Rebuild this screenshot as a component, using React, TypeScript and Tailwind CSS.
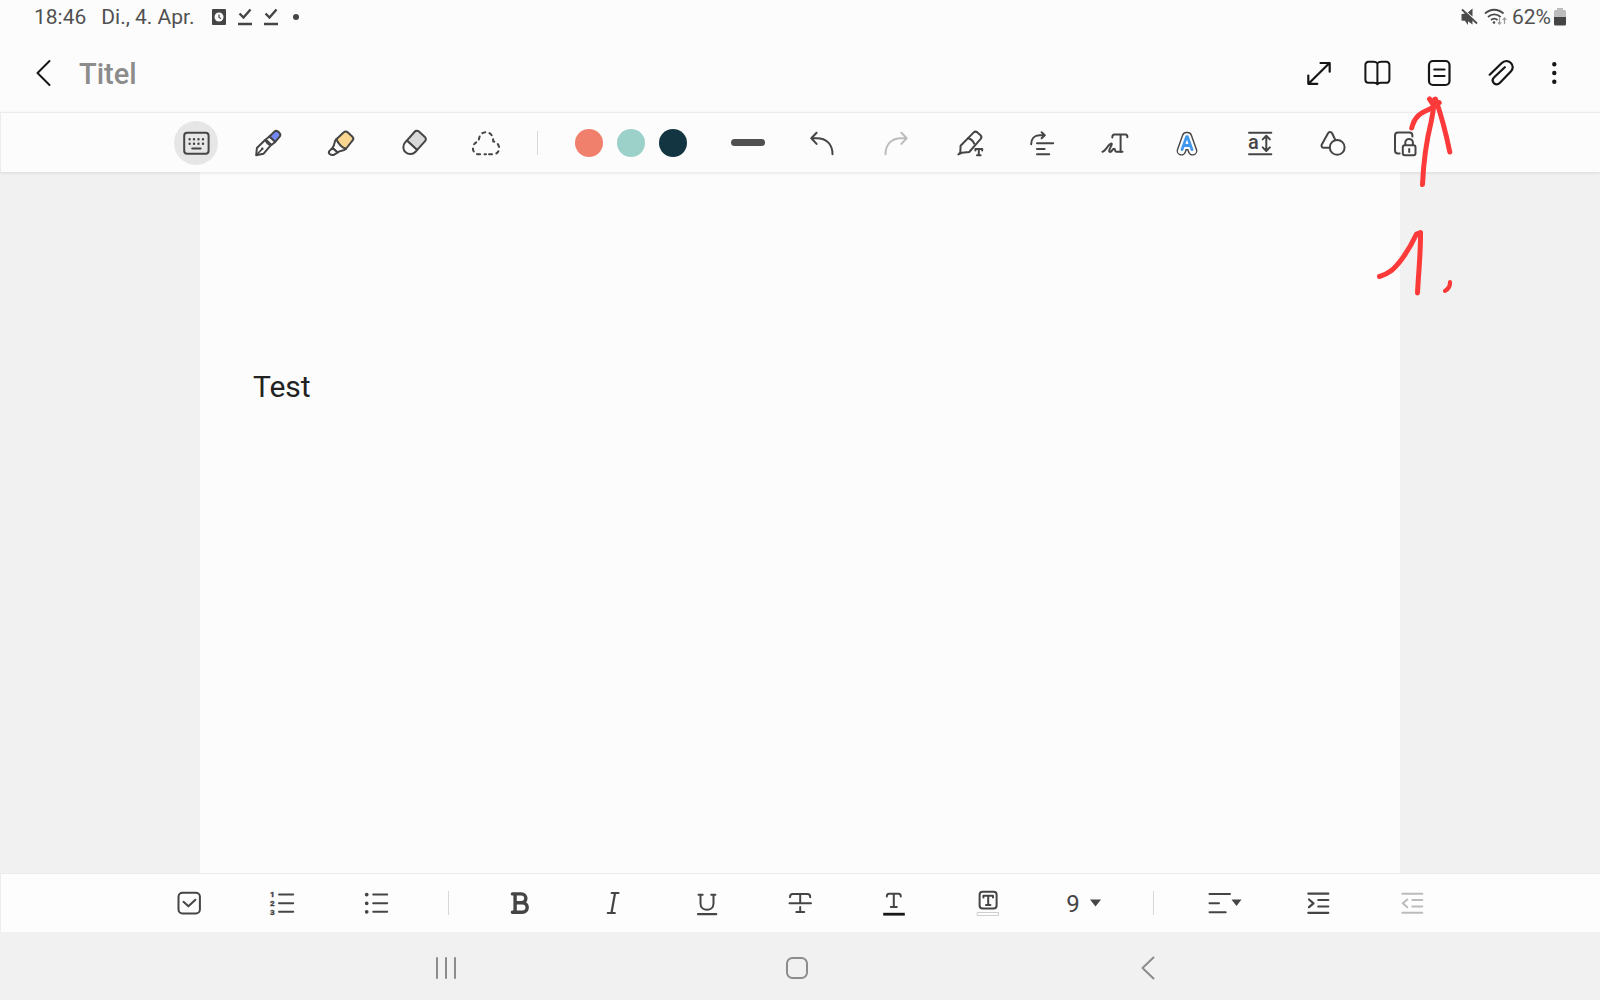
import { useState, type ReactNode } from 'react';
import clsx from 'clsx';

type IconProps = {
    children: ReactNode;
    width?: number;
};

const Icon = ({ children, width = 28 }: IconProps) => (
    <svg
        width={width}
        height={28}
        viewBox={`0 0 ${width} 28`}
        fill="none"
        stroke="currentColor"
        strokeWidth={2}
        strokeLinecap="round"
        strokeLinejoin="round"
        className="shrink-0"
        aria-hidden="true"
    >
        {children}
    </svg>
);

type ToolButtonProps = {
    label: string;
    children: ReactNode;
    active?: boolean;
    disabled?: boolean;
    onClick?: () => void;
};

const ToolButton = ({ label, children, active, disabled, onClick }: ToolButtonProps) => (
    <button
        type="button"
        aria-label={label}
        disabled={disabled}
        onClick={onClick}
        className="flex items-center justify-center"
    >
        <span
            className={clsx(
                'flex size-11 items-center justify-center rounded-full',
                active && 'bg-[#e6e6e6]',
                disabled && 'text-[#bcbcbc]',
            )}
        >
            {children}
        </span>
    </button>
);

const Divider = () => <div className="h-6 w-px bg-[#d8d8d8]" />;

const PEN_TOOLS = [
    {
        id: 'keyboard',
        label: 'Tastatur',
        icon: (
            <Icon>
                <rect x="2.2" y="3.8" width="24.4" height="21" rx="3" />
                <path d="M7.6 10.3h.01M12 10.3h.01M16.5 10.3h.01M21 10.3h.01M7.6 14.8h.01M12 14.8h.01M16.5 14.8h.01M21 14.8h.01" strokeWidth="2.4" />
                <path d="M10.2 19.4h8.4" />
            </Icon>
        ),
    },
    {
        id: 'pen',
        label: 'Stift',
        icon: (
            <Icon>
                <path d="M15.4 7.4l4.9-4.6c1.4-1.3 3.2-1 4.6.4 1.6 1.6 1.8 3.3.6 4.7l-4.3 5z" fill="#7389f5" />
                <path d="M11.8 10.4l3.6-3 5.8 5.5-3.8 3.1z" fill="#fcfcfc" />
                <path d="M2.2 26.2l.7-7.2 8.4-8.3c1 3 2.8 4.8 5.6 5.5l-7.5 8.6z" fill="#fcfcfc" />
                <path d="M2.6 25.8l5.2-5.4" strokeWidth="1.6" />
                <circle cx="8.3" cy="19.8" r=".6" fill="currentColor" strokeWidth="1.4" />
            </Icon>
        ),
    },
    {
        id: 'highlighter',
        label: 'Textmarker',
        icon: (
            <Icon>
                <path d="M9.3 10.3l7.5-7c1.4-1.2 2.8-1.1 4.1.1l4.3 4c1.4 1.3 1.6 2.6.4 4L18.8 20c-3.9-1.6-7.2-4.700-9.5-9.700z" fill="#fad791" />
                <path d="M9.3 10.3c-2.7 2.5-.9 4.8-3.8 8.7l5.1 4.5c3.1-2.9 5.1-.7 8.2-3.500-4-1.700-7.200-4.800-9.500-9.700z" fill="#fcfcfc" />
                <path d="M5.5 19l-3 2.900c-1 1.200-.8 2.100.2 3 1.300 1.100 2.700 1.200 4.500.8l3.400-2.200z" fill="#fcfcfc" />
            </Icon>
        ),
    },
    {
        id: 'eraser',
        label: 'Radierer',
        icon: (
            <Icon>
                <g transform="rotate(-48 14 14)">
                    <path d="M11 7h11.800a3 3 0 0 1 3 3v8a3 3 0 0 1-3 3H11z" fill="#d9d9d9" />
                    <path d="M11 7H8.500a7 7 0 0 0 0 14H11z" fill="#fcfcfc" />
                </g>
            </Icon>
        ),
    },
    {
        id: 'lasso',
        label: 'Auswahl',
        icon: (
            <Icon>
                <path
                    d="M14 25.3H5.800C-1 24-.8 13.600 6.800 12.400 6.600 6.800 9.800 3.200 14 3.200s7.400 3.600 7.200 9.200C28.800 13.600 29 24 22.200 25.300z"
                    strokeDasharray="3 4.400"
                    strokeDashoffset="1.500"
                />
            </Icon>
        ),
    },
];

const COLORS = [
    { name: 'Koralle', className: 'bg-[#f07f6c]' },
    { name: 'Mint', className: 'bg-[#9bd1c8]' },
    { name: 'Dunkelblau', className: 'bg-[#133441]' },
];

const WRITING_TOOLS = [
    {
        label: 'Handschrift in Text',
        icon: (
            <Icon>
                <path d="M2.400 25.400l1.900-1.900.3-6.800L17.500 3.600c1.200-1.200 2.600-1.200 3.900-.2l2.900 2.500c1.400 1.300 1.500 2.600.4 4L13.200 23l-7.500.8z" />
                <path d="M12.200 9.200c2.300.6 4.800 2.600 6 5.400" />
                <path d="M19.400 21.600v-1.600h6.800v1.600M22.800 20v6.300M21 26.300h3.600" />
            </Icon>
        ),
    },
    {
        label: 'Ausrichten',
        icon: (
            <Icon>
                <path d="M3.200 15.300c0-5.600 3.300-9 8.300-9h5M13.600 3.300l3.200 3-3.200 3" />
                <path d="M9 14.200h16.200M9 20h7.600M9 25.300h12.200" />
            </Icon>
        ),
    },
    {
        label: 'Handschrift verbessern',
        icon: (
            <Icon>
                <path d="M1.500 22.800c3.300-1 5.800-7.600 8.800-8.200 2.200-.3-4 7.700-1.400 8.300 2 .4 2.300-3.200 4.200-3.200 1.600 0 .2 3 2.200 3h6.200" />
                <path d="M11.300 8.600c0-2 .6-3 2.200-3h11c1.300 0 1.900.9 1.900 2.600M19.600 5.800v16.900" />
            </Icon>
        ),
    },
    {
        label: 'Stil',
        icon: (
            <Icon>
                <path d="M8.400 21.800L13.500 7.600h1l5.100 14.200M11 16.500h6" strokeWidth="9.600" />
                <path d="M8.400 21.800L13.500 7.600h1l5.100 14.200M11 16.500h6" stroke="#fcfcfc" strokeWidth="6.800" />
                <path d="M9 20.600L13.600 7.600h.8L19 20.600M11 16.500h6" stroke="#3f97ee" strokeWidth="2.800" />
            </Icon>
        ),
    },
    {
        label: 'Zeilenabstand',
        icon: (
            <Icon>
                <path d="M3 3.700h22.300M3 25.300h22.300" />
                <text x="2" y="19.500" fontSize="20" fontFamily="Roboto, sans-serif" fontWeight="500" fill="currentColor" stroke="none">a</text>
                <path d="M20.300 7.200v14.400M16.700 10.400l3.600-3.600 3.600 3.600M16.700 18.400l3.600 3.600 3.600-3.600" />
            </Icon>
        ),
    },
    {
        label: 'Formen',
        icon: (
            <Icon>
                <circle cx="18.200" cy="18.400" r="7.400" />
                <path d="M10.200 18.800H5c-2 0-3-1.500-2.200-3.300L8.900 4.400c1-1.800 3.200-1.900 4.200-.1l3 6.200" />
            </Icon>
        ),
    },
    {
        label: 'Seite sperren',
        icon: (
            <Icon>
                <path d="M8.700 24.400H7a3 3 0 0 1-3-3V6.600a3 3 0 0 1 3-3h11.400a3 3 0 0 1 3 3v1" />
                <rect x="11.800" y="16.300" width="12.700" height="10" rx="2" />
                <path d="M14.300 16v-2.300a3.800 3.800 0 0 1 7.600 0V16M18.200 20v3" />
            </Icon>
        ),
    },
];

const LIST_TOOLS = [
    {
        label: 'Checkliste',
        icon: (
            <Icon>
                <rect x="3.500" y="3.700" width="21.400" height="20.800" rx="4" />
                <path d="M8.500 12.800l4.900 4.400 7-6.500" />
            </Icon>
        ),
    },
    {
        label: 'Nummerierte Liste',
        icon: (
            <Icon>
                <path d="M11 5.600h14.200M11 14.300h14.200M11 22.800h14.200" />
                <g fontSize="8" fontFamily="Roboto, sans-serif" fontWeight="900" fill="currentColor" stroke="currentColor" strokeWidth=".3">
                    <text x="2" y="8.400">1</text>
                    <text x="2" y="17">2</text>
                    <text x="2" y="25.600">3</text>
                </g>
            </Icon>
        ),
    },
    {
        label: 'Aufzählung',
        icon: (
            <Icon>
                <path d="M11.200 5.600h14M11.200 14.300h14M11.200 22.800h14" />
                <path d="M4.700 5.600h.01M4.700 14.300h.01M4.700 22.800h.01" strokeWidth="3.800" />
            </Icon>
        ),
    },
];

const FORMAT_TOOLS = [
    {
        label: 'Fett',
        icon: (
            <Icon>
                <path d="M6.400 4.900h8.800c6.200 0 6.200 8.900 0 8.900H9.100h7c6.800 0 6.800 9.400 0 9.400H6.400M9.100 5v18" strokeWidth="3.400" />
            </Icon>
        ),
    },
    {
        label: 'Kursiv',
        icon: (
            <Icon>
                <path d="M12.700 4h6.800M8.800 24h7M16 4.200l-3.500 19.600" strokeWidth="2.200" />
            </Icon>
        ),
    },
    {
        label: 'Unterstrichen',
        icon: (
            <Icon>
                <path d="M5.500 5.700h4.200M18.200 5.700h4.200M7.500 5.800v8.800c0 8.300 13 8.300 13 0V5.800" />
                <path d="M5 25.200h18.200" strokeWidth="2.200" />
            </Icon>
        ),
    },
    {
        label: 'Durchgestrichen',
        icon: (
            <Icon>
                <path d="M4 8.200c0-2 .9-3.200 2.700-3.200h14.800c1.800 0 2.700 1.200 2.700 3.200M14.200 5v9M3.500 14.300h21.500M14.200 18v5M10.300 23h7.900" />
            </Icon>
        ),
    },
    {
        label: 'Textfarbe',
        icon: (
            <Icon>
                <path d="M6.800 7.600c0-1.900.7-2.900 2.200-2.900h9.600c1.500 0 2.200 1 2.200 2.900M13.800 4.800v13.200M10.800 18h6" />
                <path d="M3.200 25.200h21.600" stroke="#181818" strokeWidth="2.800" strokeLinecap="butt" />
            </Icon>
        ),
    },
    {
        label: 'Texthintergrund',
        icon: (
            <Icon>
                <rect x="5.600" y="2.800" width="17" height="16.600" rx="3" />
                <path d="M9.400 8.500V6.800h9.600v1.700M14.200 6.800v9.200M12 16h4.400" />
                <rect x="3.500" y="23.500" width="21" height="3" stroke="#cfcfcf" strokeWidth="1" fill="#fdfdfd" />
            </Icon>
        ),
    },
];

const HeaderButton = ({ label, children }: { label: string; children: ReactNode }) => (
    <button type="button" aria-label={label} className="flex h-11 items-center justify-center text-[#161616]">
        {children}
    </button>
);

const StatusBar = () => (
    <div className="flex h-[34px] items-center justify-between px-[34px] text-[21px] leading-6 text-[#505050]">
        <div className="flex items-center">
            <span>18:46</span>
            <span className="ml-[15px]">Di., 4. Apr.</span>
            <svg width="68" height="18" viewBox="0 0 68 18" className="ml-4" fill="none" stroke="#454545" strokeWidth="2.400" aria-hidden="true">
                <rect x="1" y="1" width="14" height="16" rx="1" fill="#454545" stroke="none" />
                <circle cx="8" cy="9" r="4.500" fill="#fcfcfc" stroke="none" />
                <path d="M8 6.500v3l2 1" strokeWidth="1.200" />
                <path d="M28.500 5.500l4 4 7-8M27 16h14M54.500 5.500l4 4 7-8M53 16h14" />
            </svg>
            <span className="ml-[14px] size-[6px] rounded-full bg-[#454545]" />
        </div>
        <div className="flex items-center">
            <svg width="46" height="18" viewBox="0 0 46 18" fill="none" stroke="#4a4a4a" aria-hidden="true">
                <path d="M.5 6h3.500l3 3v8L3.700 12.500H.5zM11.500.5v8L6.800 4.500z" fill="#4a4a4a" stroke="none" />
                <path d="M1.500 6l4-1 6 6v5.500L6 12.500H1.500z" fill="#4a4a4a" stroke="none" />
                <path d="M1 1.500l15 14" strokeWidth="1.800" />
                <path d="M24 5.500c5.500-5 13-5 18.500 0M27 9c3.700-3.400 8.900-3.400 12.600 0M30 12c2-1.700 4.600-1.700 6.500 0" strokeWidth="1.800" />
                <circle cx="33" cy="14.500" r="1.300" fill="#4a4a4a" stroke="none" />
                <path d="M38.500 10v6M36.800 14.300l1.700 1.900 1.700-1.900M43.500 16v-6M41.800 11.800l1.700-1.900 1.700 1.900" stroke="#9a9a9a" strokeWidth="1.200" />
            </svg>
            <span className="ml-[5px]">62%</span>
            <svg width="12" height="18" viewBox="0 0 12 18" className="ml-[3px]" aria-hidden="true">
                <path d="M3 0h6v2h1.500A1.500 1.500 0 0 1 12 3.500V9H0V3.500A1.500 1.500 0 0 1 1.500 2H3z" fill="#bdbdbd" />
                <path d="M0 9h12v7a1.500 1.500 0 0 1-1.500 1.500h-9A1.500 1.500 0 0 1 0 16z" fill="#454545" />
            </svg>
        </div>
    </div>
);

const Header = () => (
    <header className="flex h-[78px] items-center justify-between pr-8 pl-[30px]">
        <div className="flex items-center">
            <HeaderButton label="Zurück">
                <Icon>
                    <path d="M19.500 2L7.500 14l12 12" />
                </Icon>
            </HeaderButton>
            <input
                type="text"
                aria-label="Titel"
                placeholder="Titel"
                className="ml-[21px] w-80 bg-transparent pt-[2px] text-[29px] leading-9 font-medium text-[#161616] outline-none placeholder:text-[#8c8c8c]"
            />
        </div>
        <div className="flex items-center">
            <HeaderButton label="Vollbild">
                <Icon>
                    <path d="M3.500 24.700L24.500 4M15.500 4h9.200v8.700M3.300 16.500v8.300h9" strokeWidth="2.200" />
                </Icon>
            </HeaderButton>
            <div className="ml-[30px] flex">
                <HeaderButton label="Lesemodus">
                    <Icon>
                        <path d="M14.400 4.300c-1-1.100-2-1.500-3.700-1.500H5.400a3 3 0 0 0-3 3v15a3 3 0 0 0 3 3h5.600c1.600 0 2.500.4 3.400 1.500.9-1.100 1.800-1.500 3.400-1.500h5.600a3 3 0 0 0 3-3v-15a3 3 0 0 0-3-3h-5.300c-1.700 0-2.700.4-3.700 1.500zM14.400 4.300v21" />
                    </Icon>
                </HeaderButton>
            </div>
            <div className="ml-[34px] flex gap-[34px]">
                <HeaderButton label="Seitenvorlage">
                    <Icon>
                        <rect x="4" y="2" width="20.500" height="24" rx="4" strokeWidth="2.200" />
                        <path d="M9.300 10.500h10.200M9.300 17h10.200" strokeWidth="2.200" />
                    </Icon>
                </HeaderButton>
                <HeaderButton label="Anhängen">
                    <Icon>
                        <path d="M2.700 15.700L14.500 4.200c3-2.900 6.700-2.700 9.200-.4 2.600 2.500 2.700 6 .1 8.700L13 23.700c-2 2-4.500 1.900-6.100.4-1.600-1.600-1.600-4 .3-5.900l10.600-10" strokeWidth="2.200" />
                    </Icon>
                </HeaderButton>
            </div>
            <div className="ml-[25px] flex">
                <HeaderButton label="Mehr Optionen">
                    <Icon>
                        <path d="M14.300 5.200h.01M14.300 14h.01M14.300 22.800h.01" strokeWidth="4.400" />
                    </Icon>
                </HeaderButton>
            </div>
        </div>
    </header>
);

const Annotation = () => (
    <svg
        width="90"
        height="210"
        viewBox="1370 90 90 210"
        className="pointer-events-none absolute top-[90px] right-[140px]"
        fill="none"
        stroke="#fd3a3a"
        strokeWidth="5"
        strokeLinecap="round"
        strokeLinejoin="round"
        aria-hidden="true"
    >
        <path d="M1411.700 128c3-12 9-15 17-18.500 3.500-1.600 6.500-4 10.500-6.800" />
        <path d="M1422.500 184.500c1-22 4-44 8.500-62 1.500-7 2.500-14 3.500-23" />
        <path d="M1429.500 99l4 6 2-6c5 14 9 27 14.300 53" />
        <path d="M1379.500 276.500c9-2.500 14.500-7 22-17 7.500-10 11-17 15-25.500l4-1.500c.3 20-2 40-3 60.500" />
        <path d="M1445 290.800c3.500-1.800 5.300-5 5-8.600" strokeWidth="4.200" />
    </svg>
);

const App = () => {
    const [tool, setTool] = useState('keyboard');
    const [fontSize, setFontSize] = useState('9');

    return (
        <div className="relative flex h-screen flex-col bg-[#fcfcfc] font-['Roboto',sans-serif]">
            <StatusBar />
            <Header />

            {/* Drawing toolbar */}
            <div className="relative flex h-[60px] justify-center border-t border-l border-[#ececec] bg-[#fcfcfc] text-[#454545] shadow-[0_1px_3px_rgba(0,0,0,0.10)]">
                <div className="grid w-[363px] grid-cols-5">
                    {PEN_TOOLS.map(({ id, label, icon }) => (
                        <ToolButton key={id} label={label} active={tool === id} onClick={() => setTool(id)}>
                            {icon}
                        </ToolButton>
                    ))}
                </div>
                <div className="flex w-[29px] items-center justify-center">
                    <Divider />
                </div>
                <div className="flex w-[159px] items-center justify-center gap-[14px]">
                    {COLORS.map(({ name, className }) => (
                        <button key={name} type="button" aria-label={name} className={clsx('size-7 rounded-full', className)} />
                    ))}
                </div>
                <div className="grid w-[223px] grid-cols-3">
                    <ToolButton label="Strichstärke">
                        <span className="h-[7px] w-[34px] rounded-full bg-[#505050]" />
                    </ToolButton>
                    <ToolButton label="Rückgängig">
                        <Icon>
                            <path d="M8.600 3.700L3.300 9.300l5.300 5.600M3.500 9.300h5.200c9.500 0 15.800 5.500 15.800 16" />
                        </Icon>
                    </ToolButton>
                    <ToolButton label="Wiederholen" disabled>
                        <Icon>
                            <path d="M19.400 3.700l5.300 5.600-5.300 5.600M24.500 9.300h-5.200c-9.500 0-15.800 5.500-15.800 16" />
                        </Icon>
                    </ToolButton>
                </div>
                <div className="grid w-[508px] grid-cols-7">
                    {WRITING_TOOLS.map(({ label, icon }) => (
                        <ToolButton key={label} label={label}>
                            {icon}
                        </ToolButton>
                    ))}
                </div>
            </div>

            {/* Note page */}
            <main className="flex min-h-0 flex-1 justify-center bg-[#f1f1f1]">
                <textarea
                    aria-label="Notiz"
                    defaultValue="Test"
                    spellCheck={false}
                    className="block w-3/4 resize-none bg-[#fcfcfc] px-[53px] pt-[197px] text-[30px] leading-9 text-[#222] outline-none"
                />
            </main>

            {/* Text formatting toolbar */}
            <div className="flex h-[59px] justify-center border-t border-l border-[#ececec] bg-[#fdfdfd] text-[#454545]">
                <div className="grid w-[281px] grid-cols-3">
                    {LIST_TOOLS.map(({ label, icon }) => (
                        <ToolButton key={label} label={label}>
                            {icon}
                        </ToolButton>
                    ))}
                </div>
                <div className="flex w-[50px] items-center justify-center">
                    <Divider />
                </div>
                <div className="grid w-[655px] grid-cols-7">
                    {FORMAT_TOOLS.map(({ label, icon }) => (
                        <ToolButton key={label} label={label}>
                            {icon}
                        </ToolButton>
                    ))}
                    <div className="relative flex items-center justify-center">
                        <select
                            aria-label="Schriftgröße"
                            value={fontSize}
                            onChange={(e) => setFontSize(e.target.value)}
                            className="h-11 w-[38px] appearance-none bg-transparent pt-px pl-1 text-2xl outline-none"
                        >
                            {['8', '9', '10', '11', '12'].map((size) => (
                                <option key={size}>{size}</option>
                            ))}
                        </select>
                        <svg width="11" height="8" viewBox="0 0 11 8" className="pointer-events-none absolute right-[27px]" fill="currentColor" aria-hidden="true">
                            <path d="M0 .5h11L5.500 7.500z" />
                        </svg>
                    </div>
                </div>
                <div className="flex w-[50px] items-center justify-center">
                    <Divider />
                </div>
                <div className="grid w-[281px] grid-cols-3">
                    <ToolButton label="Textausrichtung">
                        <Icon width={34}>
                            <path d="M1.500 5h20.500M1.500 14.300h9.500M1.500 23.200h16.200" />
                            <path d="M23.500 10.500h10L28.500 17z" fill="currentColor" stroke="none" />
                        </Icon>
                    </ToolButton>
                    <ToolButton label="Einzug vergrößern">
                        <Icon>
                            <path d="M4.300 4.700h20M14.300 11h10M14.300 17.500h10M4.300 23.800h20M5 10.500l4.500 3.800L5 18.200" strokeWidth="2.200" />
                        </Icon>
                    </ToolButton>
                    <ToolButton label="Einzug verkleinern" disabled>
                        <Icon>
                            <path d="M4.300 4.700h20M14.300 11h10M14.300 17.500h10M4.300 23.800h20M9.300 10.500l-4.500 3.800 4.500 3.900" />
                        </Icon>
                    </ToolButton>
                </div>
            </div>

            {/* System navigation */}
            <nav className="flex h-[68px] justify-center bg-[#f1f1f1] pr-[6px] text-[#8c8c8c]">
                <div className="grid w-[1054px] grid-cols-3 pt-1">
                    <ToolButton label="Letzte Apps">
                        <Icon>
                            <path d="M5 4v20M14 4v20M23 4v20" />
                        </Icon>
                    </ToolButton>
                    <ToolButton label="Startbildschirm">
                        <Icon>
                            <rect x="4" y="4" width="20" height="20" rx="5.500" />
                        </Icon>
                    </ToolButton>
                    <ToolButton label="Zurück">
                        <Icon>
                            <path d="M19.500 3.500L8.500 14l11 10.500" />
                        </Icon>
                    </ToolButton>
                </div>
            </nav>

            <Annotation />
        </div>
    );
};

export default App;
